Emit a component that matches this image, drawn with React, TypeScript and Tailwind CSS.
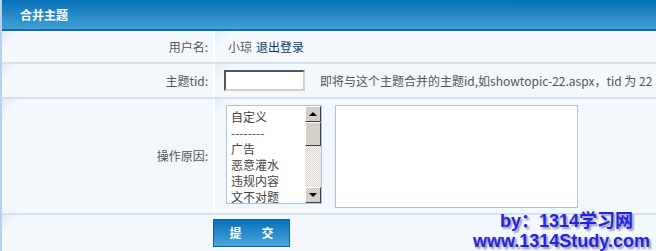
import React from 'react';

const REASONS = ['自定义', '--------', '广告', '恶意灌水', '违规内容', '文不对题'];

const cellCorner =
  'bg-[linear-gradient(135deg,#e2ecf8_0px,#f3f8fd_14px,#f3f8fd_100%)]';

const Row: React.FC<{ label: string; h: string; children: React.ReactNode }> = ({
  label,
  h,
  children,
}) => (
  <div className={`flex ${h} border-b-2 border-b-[#d3e1ee]`}>
    <div className={`w-[211px] shrink-0 flex items-center justify-end pr-[5px] text-[#555] ${cellCorner}`}>
      {label}
    </div>
    <div className="w-[2px] shrink-0 bg-white" />
    <div className={`flex-1 flex items-center ${cellCorner}`}>{children}</div>
  </div>
);

const ReasonList: React.FC = () => (
  <div className="flex w-[96px] h-[99px] border border-[#a9c4df] bg-white overflow-hidden">
    <div className="flex-1 pl-[4px] pt-[3px] leading-[16px] text-[#444]">
      {REASONS.map((r) => (
        <div key={r} className="whitespace-nowrap">{r}</div>
      ))}
    </div>
    <div className="w-[16px] flex flex-col bg-[repeating-conic-gradient(#d4d0c8_0%_25%,#ffffff_0%_50%)] bg-[length:2px_2px]">
      <div className="h-[16px] bg-[#d4d0c8] border border-t-white border-l-white border-r-[#404040] border-b-[#404040] flex items-center justify-center">
        <div className="w-0 h-0 border-l-[4px] border-r-[4px] border-b-[4px] border-l-transparent border-r-transparent border-b-black" />
      </div>
      <div className="h-[24px] bg-[#d4d0c8] border border-t-white border-l-white border-r-[#404040] border-b-[#404040]" />
      <div className="flex-1" />
      <div className="h-[16px] bg-[#d4d0c8] border border-t-white border-l-white border-r-[#404040] border-b-[#404040] flex items-center justify-center">
        <div className="w-0 h-0 border-l-[4px] border-r-[4px] border-t-[4px] border-l-transparent border-r-transparent border-t-black" />
      </div>
    </div>
  </div>
);

const App: React.FC = () => {
  return (
    <div className="relative w-[656px] h-[251px] overflow-hidden bg-[#f3f8fd] border-l-2 border-l-[#b7d1ea] font-['SimSun','Noto_Sans_CJK_SC',sans-serif] text-[12px]">
      <div className="h-[31px] flex items-center pl-[18px] border-b-2 border-b-[#0b6db3] bg-[linear-gradient(#0472b8,#44a0d6)] text-white font-bold">
        合并主题
      </div>

      <Row label="用户名:" h="h-[33px]">
        <span className="ml-[13px] text-[#555]">小琼</span>
        <a className="ml-[4px] text-[#0c3a66]">退出登录</a>
      </Row>

      <Row label="主题tid:" h="h-[35px]">
        <input className="ml-[9px] w-[81px] h-[21px] bg-white border-2 border-t-[#555] border-l-[#555] border-r-[#d4d0c8] border-b-[#d4d0c8] outline-none" />
        <span className="ml-[15px] text-[#555] whitespace-nowrap">
          即将与这个主题合并的主题id,如showtopic-22.aspx，tid 为 22
        </span>
      </Row>

      <Row label="操作原因:" h="h-[116px]">
        <div className="ml-[11px] flex items-start gap-[13px] self-start mt-[6px]">
          <ReasonList />
          <div className="w-[243px] h-[103px] border border-[#a9c4df] bg-white" />
        </div>
      </Row>

      <div className={`flex h-[36px] ${cellCorner}`}>
        <div className="w-[211px] shrink-0" />
        <button className="mt-[4px] w-[77px] h-[28px] flex items-center justify-center gap-[20px] border border-[#0a64a8] bg-[linear-gradient(#0872bb,#4aa4db)] text-white font-bold whitespace-nowrap">
          <span>提</span>
          <span>交</span>
        </button>
      </div>

      <div className="absolute right-[6px] bottom-[0px] flex flex-col items-center font-['Liberation_Sans','Noto_Sans_CJK_SC',sans-serif] font-bold text-[18px] leading-[20px] text-[#2323e6] [text-shadow:2px_2px_2px_#9a9aa8]">
        <div className="pl-[10px]">by：1314学习网</div>
        <div>www.1314Study.com</div>
      </div>
    </div>
  );
};

export default App;
